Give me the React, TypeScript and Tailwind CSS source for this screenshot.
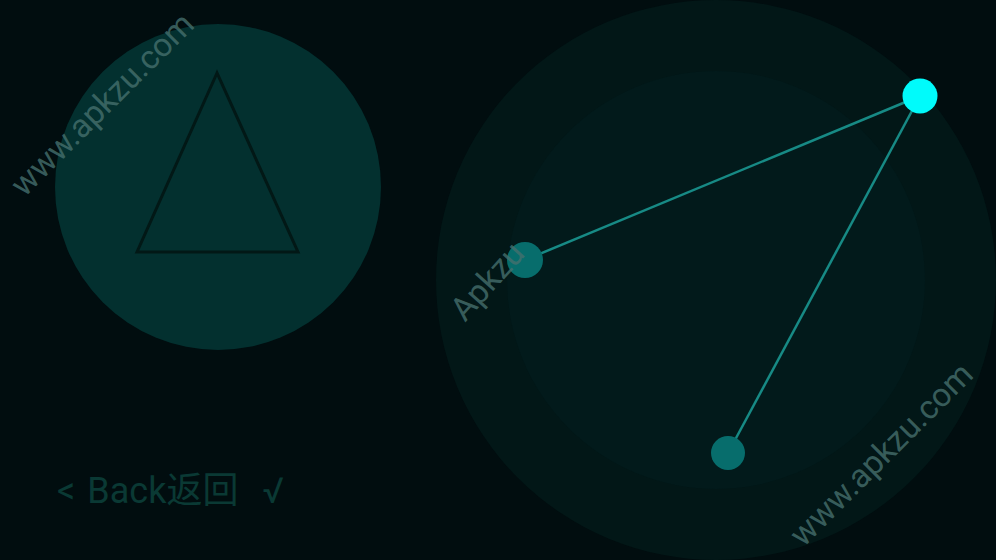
export default function App() {
  return (
    <div
      className="relative w-[996px] h-[560px] overflow-hidden bg-[#010d0f]"
      style={{ fontFamily: "Roboto, 'Noto Sans CJK SC', sans-serif" }}
    >
      {/* Left shape pad */}
      <div className="absolute left-[55px] top-[24px] w-[326px] h-[326px] rounded-full bg-[#03302f]">
        <svg className="absolute inset-0" width="326" height="326" viewBox="0 0 326 326">
          <polygon
            points="162,49 82,228 243,228"
            fill="none"
            stroke="#021816"
            strokeWidth="3"
            strokeLinejoin="miter"
          />
        </svg>
      </div>

      {/* Right constellation */}
      <svg className="absolute left-0 top-0" width="996" height="560" viewBox="0 0 996 560">
        <circle cx="716" cy="280" r="280" fill="#021717" />
        <circle cx="716" cy="280" r="209" fill="#021a1b" />
        <line x1="920" y1="96" x2="525" y2="260" stroke="#178a85" strokeWidth="2.5" />
        <line x1="920" y1="96" x2="728" y2="453" stroke="#178a85" strokeWidth="2.5" />
        <circle cx="525" cy="260" r="18" fill="#076d6c" />
        <circle cx="728" cy="453" r="17" fill="#076d6c" />
        <circle cx="920" cy="96" r="17.5" fill="#00fbfb" />
      </svg>

      {/* Bottom label */}
      <div className="absolute left-[57px] top-[473px] flex items-center gap-[12px] text-[36px] leading-none text-[#0a3934]">
        <span>&lt;</span>
        <span>Back返回</span>
        <span className="ml-[12px]">√</span>
      </div>

      {/* Watermarks */}
      <div className="pointer-events-none absolute left-[102px] top-[104px] -translate-x-1/2 -translate-y-1/2 -rotate-45 whitespace-nowrap text-[33px] leading-none text-[#46706e]/80">
        www.apkzu.com
      </div>
      <div className="pointer-events-none absolute left-[881px] top-[454px] -translate-x-1/2 -translate-y-1/2 -rotate-45 whitespace-nowrap text-[33px] leading-none text-[#46706e]/80">
        www.apkzu.com
      </div>
      <div className="pointer-events-none absolute left-[487px] top-[281px] -translate-x-1/2 -translate-y-1/2 -rotate-[48deg] whitespace-nowrap text-[33px] leading-none text-[#46706e]/80">
        Apkzu
      </div>
    </div>
  );
}
